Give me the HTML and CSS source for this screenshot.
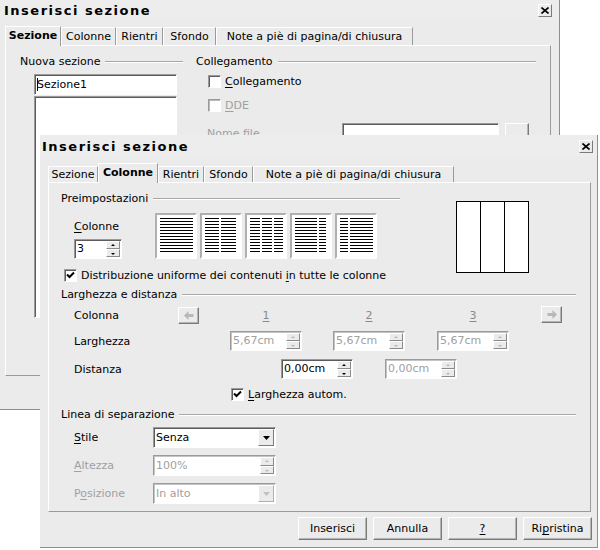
FILE: index.html
```html
<!DOCTYPE html>
<html lang="it">
<head>
<meta charset="utf-8">
<title>Inserisci sezione</title>
<link rel="stylesheet" href="styles.css">
</head>
<body>

<div class="dlg back">
  <div class="title back-title">
    <span>Inserisci sezione</span>
    <span class="close"><svg width="8" height="7" viewBox="0 0 8 7"><path d="M0.5 0.5 L7.5 6.5 M7.5 0.5 L0.5 6.5" stroke="#000" stroke-width="1.6"/></svg></span>
  </div>
  <div class="tabs back-tabs">
    <div class="tab active" style="width:56px">Sezione</div>
    <div class="tab" style="width:55px">Colonne</div>
    <div class="tab" style="width:47px">Rientri</div>
    <div class="tab" style="width:53px">Sfondo</div>
    <div class="tab" style="width:197px">Note a piè di pagina/di chiusura</div>
  </div>
  <div class="panel back-panel">
    <div class="bcol-left">
      <div class="hdr"><span>Nuova sezione</span><i></i></div>
      <div class="input name-input"><span class="caret"></span>Sezione1</div>
      <div class="input list"></div>
    </div>
    <div class="bcol-right">
      <div class="hdr"><span>Collegamento</span><i></i></div>
      <div class="chkrow link-row"><span class="cb"></span><span><u>C</u>ollegamento</span></div>
      <div class="chkrow dde-row dis"><span class="cb"></span><span><u>D</u>DE</span></div>
      <div class="file-row">
        <span class="file-lbl dis">Nome file</span>
        <div class="input file-input"></div>
        <div class="btn file-btn"></div>
      </div>
    </div>
  </div>
</div>

<div class="dlg front">
  <div class="title front-title">
    <span>Inserisci sezione</span>
    <span class="close"><svg width="8" height="7" viewBox="0 0 8 7"><path d="M0.5 0.5 L7.5 6.5 M7.5 0.5 L0.5 6.5" stroke="#000" stroke-width="1.6"/></svg></span>
  </div>
  <div class="tabs front-tabs">
    <div class="tab" style="width:50px">Sezione</div>
    <div class="tab active" style="width:60px">Colonne</div>
    <div class="tab" style="width:46px">Rientri</div>
    <div class="tab" style="width:49px">Sfondo</div>
    <div class="tab" style="width:201px">Note a piè di pagina/di chiusura</div>
  </div>
  <div class="panel front-panel">

    <div class="sec1">
      <div class="s1left">
        <div class="hdr"><span>Preimpostazioni</span><i></i></div>
        <div class="prow">
          <div class="colbox">
            <div class="lbl"><u>C</u>olonne</div>
            <div class="input spin num-spin">
              <span class="txt">3</span>
              <span class="sbtns"><i class="up"></i><i class="dn"></i></span>
            </div>
          </div>
          <div class="presets">
            <div class="pre"><b style="width:33px"></b></div>
            <div class="pre"><b style="width:14px"></b><b style="width:15px"></b></div>
            <div class="pre"><b style="width:10px"></b><b style="width:10px"></b><b style="width:9px"></b></div>
            <div class="pre"><b style="width:22px"></b><b style="width:7px"></b></div>
            <div class="pre"><b style="width:8px"></b><b style="width:23px"></b></div>
          </div>
        </div>
        <div class="chkrow uni-row"><span class="cb on"><svg width="9" height="8" viewBox="0 0 9 8"><path d="M1 3.5 L3.5 6 L8 1.5" stroke="#000" stroke-width="2" fill="none"/></svg></span><span>Distribuzione uniforme dei contenuti <u>i</u>n tutte le colonne</span></div>
      </div>
      <div class="preview"><i></i><i></i><i></i></div>
    </div>

    <div class="sec2">
      <div class="hdr"><span>Larghezza e distanza</span><i></i></div>
      <div class="row colrow">
        <span class="rlbl">Colonna</span>
        <span class="btn arrow"><svg width="10" height="9" viewBox="0 0 10 9"><path d="M0 4.5 L4.5 0 L4.5 3 L9.5 3 L9.5 6 L4.5 6 L4.5 9 Z" fill="#b8b8b8"/></svg></span>
        <span class="cnum n1"><u>1</u></span>
        <span class="cnum n2"><u>2</u></span>
        <span class="cnum n3"><u>3</u></span>
        <span class="btn arrow rarrow"><svg width="10" height="9" viewBox="0 0 10 9"><path d="M10 4.5 L5.5 0 L5.5 3 L0.5 3 L0.5 6 L5.5 6 L5.5 9 Z" fill="#b8b8b8"/></svg></span>
      </div>
      <div class="row wrow">
        <span class="rlbl">Larghezza</span>
        <div class="input spin dspin w1"><span class="txt">5,67cm</span><span class="sbtns"><i class="up"></i><i class="dn"></i></span></div>
        <div class="input spin dspin w2"><span class="txt">5,67cm</span><span class="sbtns"><i class="up"></i><i class="dn"></i></span></div>
        <div class="input spin dspin w3"><span class="txt">5,67cm</span><span class="sbtns"><i class="up"></i><i class="dn"></i></span></div>
      </div>
      <div class="row drow">
        <span class="rlbl">Distanza</span>
        <div class="input spin espin d1"><span class="txt">0,00cm</span><span class="sbtns"><i class="up"></i><i class="dn"></i></span></div>
        <div class="input spin dspin d2"><span class="txt">0,00cm</span><span class="sbtns"><i class="up"></i><i class="dn"></i></span></div>
      </div>
      <div class="chkrow auto-row"><span class="cb on"><svg width="9" height="8" viewBox="0 0 9 8"><path d="M1 3.5 L3.5 6 L8 1.5" stroke="#000" stroke-width="2" fill="none"/></svg></span><span><u>L</u>arghezza autom.</span></div>
    </div>

    <div class="sec3">
      <div class="hdr"><span>Linea di separazione</span><i></i></div>
      <div class="row srow">
        <span class="slbl"><u>S</u>tile</span>
        <div class="input combo"><span class="txt">Senza</span><span class="ddbtn"><svg width="7" height="4" viewBox="0 0 7 4"><path d="M0 0 H7 L3.5 4 Z" fill="#000"/></svg></span></div>
      </div>
      <div class="row srow dis">
        <span class="slbl"><u>A</u>ltezza</span>
        <div class="input spin dspin combo"><span class="txt">100%</span><span class="sbtns"><i class="up"></i><i class="dn"></i></span></div>
      </div>
      <div class="row srow dis">
        <span class="slbl">P<u>o</u>sizione</span>
        <div class="input combo dcombo"><span class="txt">In alto</span><span class="ddbtn"><svg width="7" height="4" viewBox="0 0 7 4"><path d="M0 0 H7 L3.5 4 Z" fill="#c0c0c0"/></svg></span></div>
      </div>
    </div>

  </div>
  <div class="buttons">
    <div class="btn pbtn">Inserisci</div>
    <div class="btn pbtn">Annulla</div>
    <div class="btn pbtn"><u>?</u></div>
    <div class="btn pbtn">Ri<u>p</u>ristina</div>
  </div>
</div>

</body>
</html>
```

FILE: styles.css
```css
* { box-sizing: border-box; margin: 0; padding: 0; }
body {
  margin: 0;
  width: 600px;
  height: 550px;
  overflow: hidden;
  position: relative;
  background: #fff;
  font: 11px "DejaVu Sans", Verdana, sans-serif;
  color: #000;
}
u { text-decoration: underline; text-underline-offset: 2px; }

.dlg {
  position: absolute;
  background: #ebebeb;
  border-right: 1px solid #8e8e8e;
  border-bottom: 1px solid #8e8e8e;
}
.back { left: 0; top: 0; width: 560px; height: 410px; }
.front { left: 40px; top: 135px; width: 558px; height: 413px; }

.title {
  display: flex;
  justify-content: space-between;
  align-items: center;
  font: bold 13px "DejaVu Sans", sans-serif;
  letter-spacing: 1.5px;
  background: #ededed;
}
.back-title { height: 20px; padding-left: 4px; padding-right: 7px; padding-top: 1px; }
.front-title { height: 22px; padding-left: 2px; padding-right: 4px; padding-top: 1px; }
.close {
  width: 14px;
  height: 13px;
  display: flex;
  align-items: center;
  justify-content: center;
  background: #ebebeb;
  border: 1px solid;
  border-color: #fff #7a7a7a #7a7a7a #fff;
}

.tabs { display: flex; align-items: flex-end; }
.back-tabs { height: 25px; margin-left: 5px; }
.front-tabs { height: 25px; margin-left: 8px; }
.tab {
  height: 16px;
  line-height: 15px;
  text-align: center;
  white-space: nowrap;
  border-top: 1px solid #fff;
  border-left: 1px solid #fff;
  border-right: 1px solid #9a9a9a;
  position: relative;
}
.back-tabs .tab { height: 18px; line-height: 17px; }
.tab.active {
  font-weight: bold;
  height: 20px;
  line-height: 17px;
  margin-bottom: -1px;
  z-index: 2;
  background: #ebebeb;
}

.panel {
  border: 1px solid;
  border-color: #fff #9a9a9a #9a9a9a #fff;
  position: relative;
}
.back-panel { margin-left: 5px; width: 546px; height: 331px; display: flex; }
.front-panel { margin-left: 8px; width: 543px; height: 330px; }

.hdr { display: flex; align-items: center; height: 14px; line-height: 14px; white-space: nowrap; }
.hdr i {
  flex: 1;
  height: 2px;
  margin-left: 5px;
  border-top: 1px solid #a8a8a8;
  border-bottom: 1px solid #fff;
}

.input {
  background: #fff;
  border: 1px solid;
  border-color: #9a9a9a #fff #fff #9a9a9a;
  box-shadow: inset 1px 1px 0 #5c5c5c;
}
.dis { color: #a0a0a0; }

/* back panel */
.bcol-left { margin-left: 14px; width: 163px; }
.bcol-left .hdr { margin-top: 9px; }
.name-input {
  margin-left: 14px;
  margin-top: 5px;
  width: 143px;
  height: 21px;
  line-height: 19px;
  padding-left: 2px;
  display: flex;
  align-items: center;
}
.caret { width: 1px; height: 13px; background: #000; margin-right: -1px; }
.list { margin-left: 14px; margin-top: 1px; width: 143px; height: 222px; }
.bcol-right { margin-left: 13px; width: 340px; }
.bcol-right .hdr { margin-top: 9px; }

.chkrow { display: flex; align-items: center; height: 14px; white-space: nowrap; }
.cb {
  width: 13px;
  height: 13px;
  flex: none;
  margin-right: 4px;
  background: #fff;
  border: 1px solid;
  border-color: #9a9a9a #fff #fff #9a9a9a;
  box-shadow: inset 1px 1px 0 #5c5c5c;
  display: flex;
  align-items: center;
  justify-content: center;
}
.dis .cb { box-shadow: inset 1px 1px 0 #b8b8b8; }
.link-row { margin-left: 12px; margin-top: 5px; }
.dde-row { margin-left: 12px; margin-top: 10px; }
.file-row { display: flex; align-items: center; margin-top: 11px; margin-left: 11px; }
.file-lbl { width: 135px; }
.file-input { width: 157px; height: 21px; }
.file-btn { width: 24px; height: 21px; margin-left: 6px; }

.btn {
  background: #ebebeb;
  border: 1px solid;
  border-color: #fff #7a7a7a #7a7a7a #fff;
  box-shadow: inset -1px -1px 0 #b4b4b4;
  display: flex;
  align-items: center;
  justify-content: center;
}

/* front panel */
.sec1 { display: flex; }
.s1left { margin-left: 12px; width: 339px; }
.s1left .hdr { margin-top: 9px; }
.prow { display: flex; margin-top: 7px; }
.colbox { width: 94px; padding-left: 13px; }
.lbl { margin-top: 7px; height: 14px; line-height: 14px; }
.num-spin { margin-top: 5px; width: 48px; }

.spin { display: flex; height: 20px; }
.spin .txt { flex: 1; line-height: 18px; padding-left: 2px; white-space: nowrap; }
.sbtns { width: 14px; display: flex; flex-direction: column; margin: 1px 1px 1px 0; }
.sbtns i {
  flex: 1;
  background: #ebebeb;
  border: 1px solid;
  border-color: #fff #8a8a8a #8a8a8a #fff;
  position: relative;
}
.sbtns i::after {
  content: "";
  position: absolute;
  left: 4px;
  width: 0;
  height: 0;
  border-left: 2px solid transparent;
  border-right: 2px solid transparent;
}
.sbtns .up::after { top: 2px; border-bottom: 2px solid #000; }
.sbtns .dn::after { top: 3px; border-top: 2px solid #000; }
.dspin { box-shadow: inset 1px 1px 0 #c4c4c4; color: #a0a0a0; }
.dspin .sbtns .up::after { border-bottom-color: #b8b8b8; }
.dspin .sbtns .dn::after { border-top-color: #b8b8b8; }

.presets { display: flex; gap: 3px; }
.pre {
  width: 42px;
  height: 46px;
  background: #fff;
  border: 2px solid;
  border-color: #b0b0b0 #fff #fff #b0b0b0;
  display: flex;
  gap: 2px;
  padding: 3px 0 0 3px;
}
.pre b {
  display: block;
  height: 35px;
  background: repeating-linear-gradient(to bottom, #000 0 1px, transparent 1px 3px);
}

.uni-row { margin-top: 9px; margin-left: 3px; }

.preview {
  margin-left: 56px;
  margin-top: 18px;
  width: 73px;
  height: 72px;
  border: 1px solid #000;
  background: #fff;
  display: flex;
}
.preview i { flex: 1; border-right: 1px solid #000; }
.preview i:last-child { border-right: none; }

.sec2 { margin-top: 6px; margin-left: 12px; width: 515px; }
.row { display: flex; align-items: center; }
.rlbl { width: 104px; margin-left: 13px; flex: none; }
.colrow { margin-top: 5px; height: 17px; }
.arrow { width: 21px; height: 17px; }
.cnum { width: 72px; text-align: center; color: #8a8a8a; }
.n1 { margin-left: 31px; }
.n2 { margin-left: 31px; }
.n3 { margin-left: 32px; }
.rarrow { margin-left: 32px; position: relative; top: -1px; }
.wrow { margin-top: 7px; }
.dspin.w1 { margin-left: 52px; }
.w1, .w2, .w3, .d1, .d2 { width: 72px; flex: none; }
.w2 { margin-left: 31px; }
.w3 { margin-left: 32px; }
.drow { margin-top: 8px; }
.d1 { margin-left: 103px; }
.d2 { margin-left: 32px; }
.auto-row { margin-top: 8px; margin-left: 170px; }

.sec3 { margin-top: 7px; margin-left: 12px; width: 515px; }
.srow { margin-top: 7px; height: 21px; }
.sec3 .hdr + .srow { margin-top: 5px; }
.slbl { width: 79px; margin-left: 13px; flex: none; }
.combo { width: 123px; height: 21px; display: flex; }
.combo .txt { flex: 1; line-height: 19px; padding-left: 2px; }
.ddbtn {
  width: 16px;
  margin: 1px 1px 1px 0;
  background: #ebebeb;
  border: 1px solid;
  border-color: #fff #7a7a7a #7a7a7a #fff;
  display: flex;
  align-items: center;
  justify-content: center;
}
.dcombo { box-shadow: inset 1px 1px 0 #c4c4c4; }
.dcombo .ddbtn { border-color: #fff #b0b0b0 #b0b0b0 #fff; }

.buttons {
  display: flex;
  justify-content: flex-end;
  gap: 6px;
  margin-top: 5px;
  padding-right: 5px;
}
.pbtn { width: 69px; height: 23px; }
```
